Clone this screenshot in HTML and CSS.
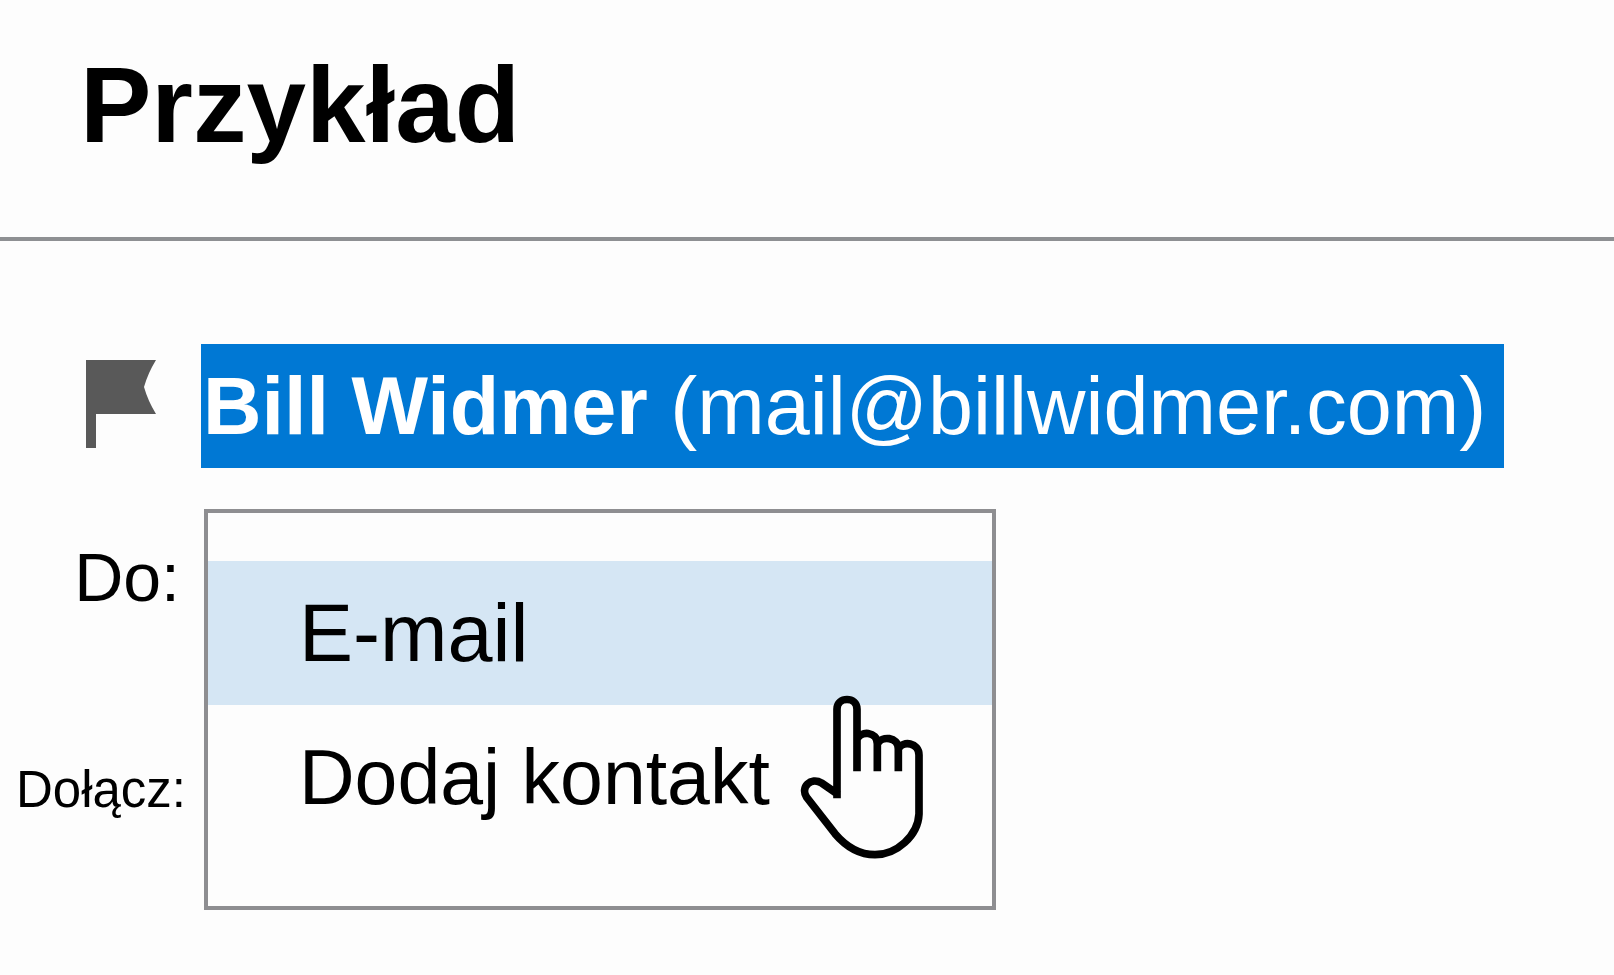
FILE: index.html
```html
<!DOCTYPE html>
<html lang="pl">

<head>
    <meta charset="utf-8">
    <title>Przykład</title>

    <link rel="stylesheet" href="styles.css">
</head>

<body>
    <header id="naglowek">
        <h1>Przykład</h1>
    </header>

    <main id="wiadomosc">
        <svg class="flaga" viewBox="0 0 70 88" aria-hidden="true">
            <path d="M0 0H70Q62 13 58 27Q62 41 70 54H10V88H0Z" fill="#595959" />
        </svg>

        <div class="nadawca"><b>Bill Widmer</b> (mail@billwidmer.com)</div>

        <div class="etykiety">
            <span class="do">Do:</span>
            <span class="dolacz">Dołącz:</span>
        </div>

        <div class="menu">
            <button type="button" class="aktywny">E-mail</button>
            <button type="button" class="kontakt">Dodaj kontakt</button>

            <svg class="kursor" viewBox="60 75 372 501" aria-hidden="true">
                <path d="M171 380V120C171 82 231 82 231 120V210C240 188 280 188 292 223C304 202 344 202 355 238C368 214 417 220 417 258V435C414 500 350 557 285 557C235 557 194 528 165 494L80 385C60 355 92 323 125 342Z" fill="#fdfdfd" />
                <path d="M171 388V120C171 82 231 82 231 120V307M231 212C240 184 292 186 292 225V307M292 225C304 200 355 202 355 240V307M355 240C368 214 417 220 417 258V435C414 500 350 557 285 557C235 557 194 528 165 494L80 385C60 355 92 323 125 342L177 378" fill="none" stroke="#000" stroke-width="23" />
            </svg>
        </div>
    </main>
</body>

</html>
```

FILE: styles.css
```css
* {
    box-sizing: border-box;
}

body {
    margin: 0;
    background-color: #fdfdfd;
    color: #000000;
    font-family: "Liberation Sans", Arial, sans-serif;
}

#naglowek {
    padding: 45px 80px 72px;
    border-bottom: 4px solid #8e9093;
}

#naglowek h1 {
    margin: 0;
    font-size: 107px;
    line-height: 120px;
    font-weight: bold;
}

#wiadomosc {
    display: grid;
    grid-template-columns: 201px 1fr;
    row-gap: 41px;
    padding: 103px 0 0;
}

.flaga {
    width: 70px;
    height: 88px;
    margin: 16px 0 0 86px;
}

.nadawca {
    justify-self: start;
    padding: 0 18px 0 2px;
    background-color: #0078d4;
    color: #ffffff;
    font-size: 81px;
    line-height: 124px;
    white-space: nowrap;
}

.etykiety {
    display: flex;
    flex-direction: column;
    align-items: flex-end;
    padding: 28px 15px 0 0;
}

.do {
    margin-right: 6px;
    font-size: 68px;
    line-height: 80px;
}

.dolacz {
    margin-top: 143px;
    font-size: 51px;
    line-height: 60px;
}

.menu {
    position: relative;
    justify-self: start;
    width: 792px;
    margin-left: 3px;
    padding: 48px 0 57px;
    border: 4px solid #8e8e91;
}

.menu button {
    display: block;
    width: 100%;
    padding: 0 0 0 91px;
    border: 0;
    background: none;
    color: #000000;
    font-family: inherit;
    line-height: 144px;
    text-align: left;
}

.menu .aktywny {
    background-color: #d5e6f4;
    font-size: 81px;
}

.menu .kontakt {
    font-size: 77px;
}

.kursor {
    position: absolute;
    right: 68px;
    bottom: 45px;
    width: 124px;
    height: 167px;
}
```
